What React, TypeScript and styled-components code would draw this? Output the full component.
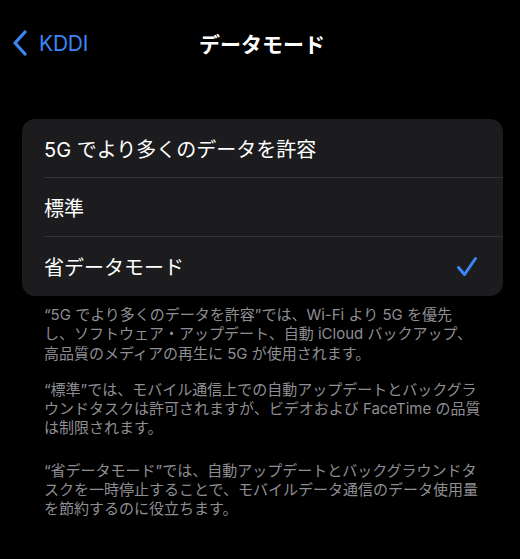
import React from "react";
import styled, { createGlobalStyle } from "styled-components";

const Global = createGlobalStyle`
  html, body { margin: 0; padding: 0; background: #000; }
  body { font-family: "Inter", "Noto Sans CJK JP", sans-serif; -webkit-font-smoothing: antialiased; }
`;

const Page = styled.div`
  width: 520px;
  height: 559px;
  background: #000;
  display: flex;
  flex-direction: column;
  overflow: hidden;
`;

const NavBar = styled.div`
  height: 86px;
  display: grid;
  grid-template-columns: 1fr auto 1fr;
  align-items: center;
  padding: 0 12px;
`;

const Back = styled.div`
  display: flex;
  align-items: center;
  gap: 11px;
  color: #3b86f7;
  font-size: 21px;
  font-family: "Inter", "Noto Sans", sans-serif;
  letter-spacing: -0.2px;
`;

const Title = styled.div`
  color: #fff;
  font-size: 21px;
  font-weight: 600;
  font-family: "Noto Sans CJK JP", sans-serif;
  transform: translateX(2px);
`;

const Card = styled.div`
  margin: 33px 17px 0 22px;
  background: #1c1c1e;
  border-radius: 13px;
  overflow: hidden;
`;

const Row = styled.div<{ $last?: boolean }>`
  height: 59px;
  display: flex;
  align-items: center;
  justify-content: space-between;
  margin-left: 22px;
  padding-right: 25px;
  border-bottom: ${(p) => (p.$last ? "none" : "1px solid #333335")};
  box-sizing: border-box;
  color: #fff;
  font-size: 20px;
  font-family: "Inter", "Noto Sans CJK JP", sans-serif;
`;

const Footer = styled.div`
  padding: 9px 20px 0 44px;
  color: #8e8e93;
  font-size: 15px;
  line-height: 19.3px;
  font-family: "Inter", "Noto Sans CJK JP", sans-serif;
  white-space: nowrap;
`;

const Para = styled.p<{ $gap: number }>`
  margin: ${(p) => p.$gap}px 0 0 0;
`;

const Check = () => (
  <svg width="22" height="22" viewBox="0 0 22 22" fill="none">
    <path d="M2.5 11.5 L8.5 18.5 L19.5 2.5" stroke="#3b86f7" strokeWidth="3" strokeLinecap="round" strokeLinejoin="round" />
  </svg>
);

const Chevron = () => (
  <svg width="16" height="26" viewBox="0 0 16 26" fill="none">
    <path d="M13 2 L3 13 L13 24" stroke="#3b86f7" strokeWidth="3.2" strokeLinecap="round" strokeLinejoin="round" />
  </svg>
);

export default function App() {
  return (
    <Page>
      <Global />
      <NavBar>
        <Back>
          <Chevron />
          <span>KDDI</span>
        </Back>
        <Title>データモード</Title>
        <div />
      </NavBar>
      <Card>
        <Row>5G でより多くのデータを許容</Row>
        <Row>標準</Row>
        <Row $last>
          省データモード
          <Check />
        </Row>
      </Card>
      <Footer>
        <Para $gap={0}>
          “5G でより多くのデータを許容”では、Wi-Fi より 5G を優先
          <br />
          し、ソフトウェア・アップデート、自動 iCloud バックアップ、
          <br />
          高品質のメディアの再生に 5G が使用されます。
        </Para>
        <Para $gap={17}>
          “標準”では、モバイル通信上での自動アップデートとバックグラ
          <br />
          ウンドタスクは許可されますが、ビデオおよび FaceTime の品質
          <br />
          は制限されます。
        </Para>
        <Para $gap={23}>
          “省データモード”では、自動アップデートとバックグラウンドタ
          <br />
          スクを一時停止することで、モバイルデータ通信のデータ使用量
          <br />
          を節約するのに役立ちます。
        </Para>
      </Footer>
    </Page>
  );
}
